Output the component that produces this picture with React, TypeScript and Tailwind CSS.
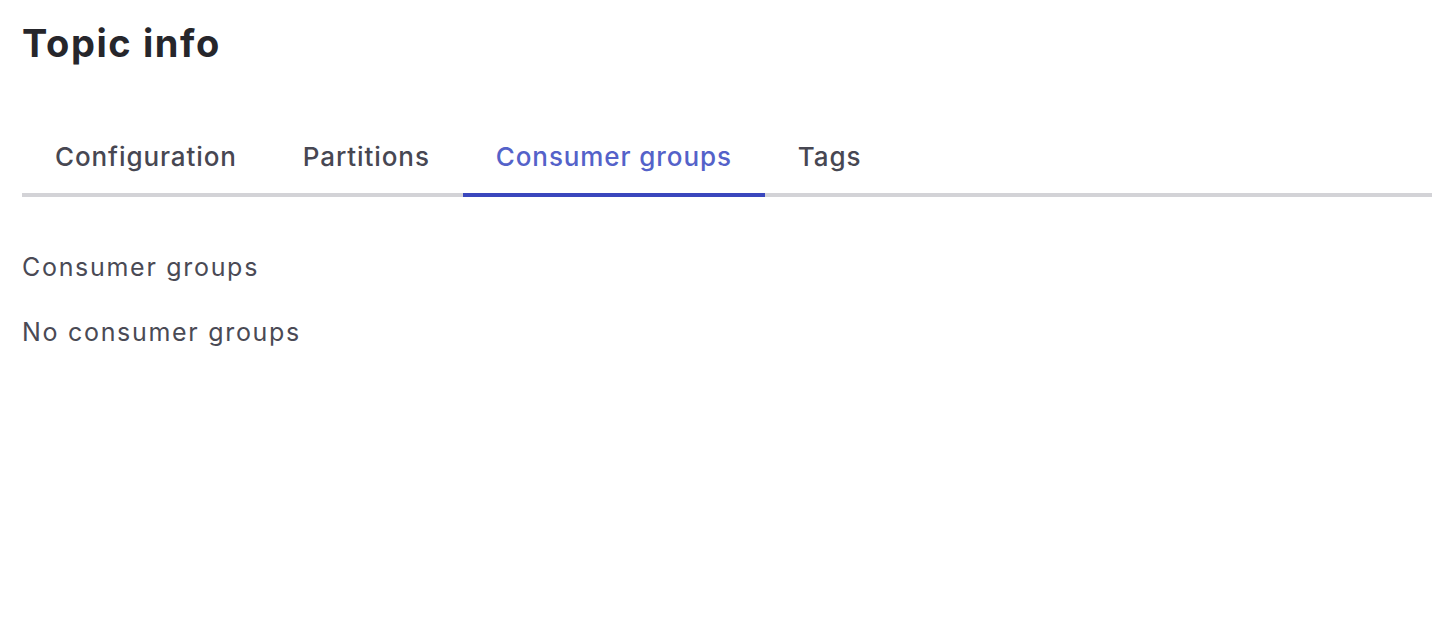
import React from "react";

const tabs = ["Configuration", "Partitions", "Consumer groups", "Tags"];

export default function App() {
  const active = "Consumer groups";
  return (
    <div className="min-h-screen bg-white pl-[22px] pt-[18px]" style={{ fontFamily: "Inter, 'Noto Sans', sans-serif" }}>
      <h1 className="text-[38px] leading-[50px] font-bold text-[#26262b] tracking-[1.6px]">Topic info</h1>
      <div className="mt-[71px] flex border-b-4 border-[#d3d3d7]">
        {tabs.map((t) => (
          <div
            key={t}
            className={
              "px-[33px] pb-[18px] -mb-[4px] border-b-4 text-[26px] leading-[36px] font-medium tracking-[0.9px] " +
              (t === active ? "border-[#3a47bd] text-[#5462c9]" : "border-transparent text-[#474752]")
            }
          >
            {t}
          </div>
        ))}
      </div>
      <div className="mt-[53px] text-[25px] leading-[34px] text-[#4a4a55] tracking-[1.7px]">Consumer groups</div>
      <div className="mt-[31px] text-[25px] leading-[34px] text-[#4a4a55] tracking-[1.7px]">No consumer groups</div>
    </div>
  );
}
